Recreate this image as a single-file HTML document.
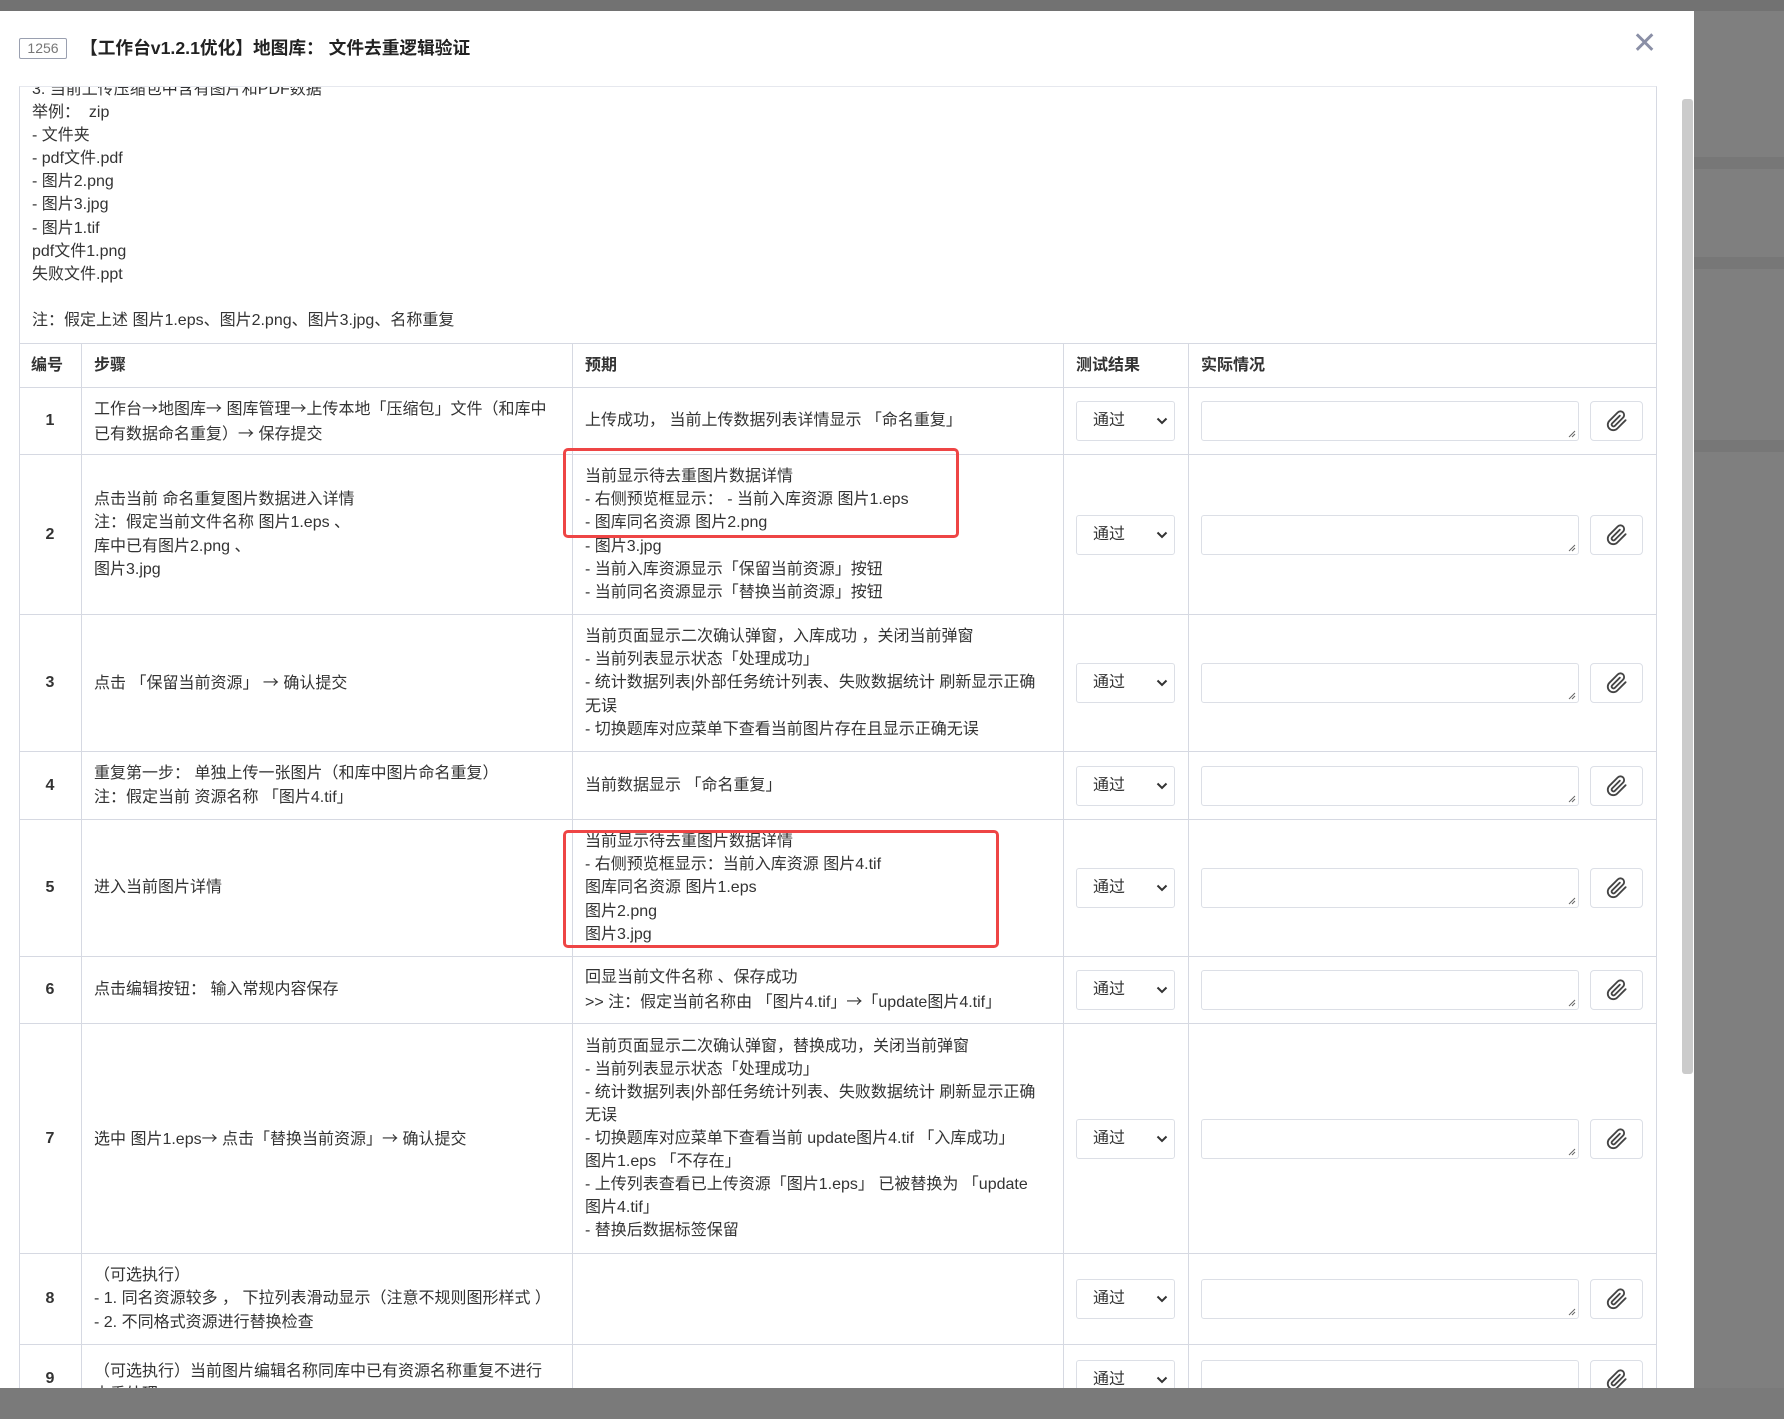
<!DOCTYPE html>
<html><head><meta charset="utf-8">
<style>
*{box-sizing:border-box;margin:0;padding:0}
html,body{width:1784px;height:1419px;overflow:hidden;background:#7f7f7f;font-family:"Liberation Sans","Noto Sans CJK SC",sans-serif;color:#333}
.ar{font-family:"Noto Sans CJK SC",sans-serif}
.top{position:absolute;left:0;top:0;width:1784px;height:11px;background:#727272}
.bg1{position:absolute;left:1694px;top:157px;width:90px;height:12px;background:#777}
.bg2{position:absolute;left:1694px;top:257px;width:90px;height:12px;background:#777}
.bg3{position:absolute;left:1694px;top:440px;width:90px;height:12px;background:#777}
.bot{position:absolute;left:0;top:1388px;width:1784px;height:31px;background:#7a7a7a}
.modal{position:absolute;left:0;top:11px;width:1694px;height:1377px;background:#fff;overflow:hidden}
.badge{position:absolute;left:19px;top:27px;width:48px;height:21px;border:1px solid #9aa0b0;border-radius:2px;font-size:14px;color:#777;text-align:center;line-height:19px}
.title{position:absolute;left:80px;top:24px;font-size:17.7px;font-weight:bold;color:#222;line-height:26px}
.close{position:absolute;left:1632px;top:18px;font-size:30px;color:#8a8fa6;line-height:30px}
.sb{position:absolute;left:1682px;top:88px;width:11px;height:975px;background:#cbcbcb;border-radius:3px}
.box{position:absolute;left:19px;top:75px;width:1638px;height:1400px;border-left:1px solid #d6d9e2;border-right:1px solid #d6d9e2;border-top:1px solid #e6e8ee}
.desc{position:absolute;left:32px;top:68px;font-size:16px;line-height:23.1px;color:#333;white-space:pre}
.row{position:absolute;left:19px;width:1638px;border-bottom:1px solid #d6d9e2}
.c{position:absolute;top:0;bottom:0;display:flex;align-items:center;font-size:16px;line-height:23.1px;border-right:1px solid #d6d9e2;white-space:nowrap}
.c0{left:0;width:63px;justify-content:center;font-weight:bold}
.c1{left:63px;width:491px;padding-left:12px}
.c2{left:554px;width:491px;padding-left:12px}
.c3{left:1045px;width:125px}
.c4{left:1170px;width:468px;border-right:none}
.hd .c{font-weight:bold}
.hd .c0{justify-content:flex-start;padding-left:12px}
.sel{position:absolute;left:12px;width:99px;height:40px;border:1px solid #dcdfe6;border-radius:3px;font-size:16px;padding-left:16px;line-height:38px;top:50%;margin-top:-20px}
.sel svg{position:absolute;right:6px;top:15px}
.ta{position:absolute;left:12px;width:378px;height:40px;border:1px solid #dcdfe6;border-radius:3px;top:50%;margin-top:-20px}
.ta svg{position:absolute;right:2px;bottom:2px}
.at{position:absolute;left:401px;width:53px;height:40px;border:1px solid #dcdfe6;border-radius:4px;top:50%;margin-top:-20px}
.at svg{position:absolute;left:15px;top:8px}
.red{position:absolute;border:3.5px solid #ee4545;border-radius:5px}
</style></head><body>
<div class="top"></div><div class="bg1"></div><div class="bg2"></div><div class="bg3"></div><div class="bot"></div>
<div class="modal">
<div class="badge">1256</div>
<div class="title">【工作台v1.2.1优化】地图库： 文件去重逻辑验证</div>
<div class="close">✕</div>
<div class="sb"></div>
<div class="box"></div>
<div style="position:absolute;left:20px;top:76px;width:1636px;height:1300px;overflow:hidden">
<div class="desc" style="left:12px;top:-9px">3. 当前上传压缩包中含有图片和PDF数据
举例：  zip
- 文件夹
- pdf文件.pdf
- 图片2.png
- 图片3.jpg
- 图片1.tif
pdf文件1.png
失败文件.ppt

注：假定上述 图片1.eps、图片2.png、图片3.jpg、名称重复</div>
</div>
<div id="t"></div>
</div>
<script>
var rows=[
["编号","步骤","预期",332,377,1],
["1","工作台→地图库→ 图库管理→上传本地「压缩包」文件（和库中<br>已有数据命名重复）→ 保存提交","上传成功， 当前上传数据列表详情显示 「命名重复」",377,444],
["2","点击当前 命名重复图片数据进入详情<br>注：假定当前文件名称 图片1.eps 、<br>库中已有图片2.png 、<br>图片3.jpg","当前显示待去重图片数据详情<br>- 右侧预览框显示：  - 当前入库资源 图片1.eps<br>- 图库同名资源 图片2.png<br>- 图片3.jpg<br>- 当前入库资源显示「保留当前资源」按钮<br>- 当前同名资源显示「替换当前资源」按钮",444,604],
["3","点击 「保留当前资源」 → 确认提交","当前页面显示二次确认弹窗，入库成功 ，关闭当前弹窗<br>- 当前列表显示状态「处理成功」<br>- 统计数据列表|外部任务统计列表、失败数据统计 刷新显示正确<br>无误<br>- 切换题库对应菜单下查看当前图片存在且显示正确无误",604,741],
["4","重复第一步： 单独上传一张图片（和库中图片命名重复）<br>注：假定当前 资源名称 「图片4.tif」","当前数据显示 「命名重复」",741,809],
["5","进入当前图片详情","当前显示待去重图片数据详情<br>- 右侧预览框显示：当前入库资源 图片4.tif<br>图库同名资源 图片1.eps<br>图片2.png<br>图片3.jpg",809,946],
["6","点击编辑按钮： 输入常规内容保存","回显当前文件名称 、保存成功<br>&gt;&gt; 注：假定当前名称由 「图片4.tif」→「update图片4.tif」",946,1013],
["7","选中 图片1.eps→ 点击「替换当前资源」→ 确认提交","当前页面显示二次确认弹窗，替换成功，关闭当前弹窗<br>- 当前列表显示状态「处理成功」<br>- 统计数据列表|外部任务统计列表、失败数据统计 刷新显示正确<br>无误<br>- 切换题库对应菜单下查看当前 update图片4.tif 「入库成功」<br>图片1.eps 「不存在」<br>- 上传列表查看已上传资源「图片1.eps」 已被替换为 「update<br>图片4.tif」<br>- 替换后数据标签保留",1013,1243],
["8","（可选执行）<br>- 1. 同名资源较多 ， 下拉列表滑动显示（注意不规则图形样式 ）<br>- 2. 不同格式资源进行替换检查","",1243,1334],
["9","（可选执行）当前图片编辑名称同库中已有资源名称重复不进行<br>去重处理","",1334,1439]
];
function ar(s){return '<div>'+s.replace(/→/g,'<span class="ar">→</span>')+'</div>';}
var chev='<svg width="12" height="8" viewBox="0 0 12 8"><path d="M1.5 1.5L6 6 10.5 1.5" stroke="#333" stroke-width="2" fill="none"/></svg>';
var sel='<div class="sel">通过'+chev+'</div>';
var ta='<div class="ta"><svg width="9" height="9" viewBox="0 0 9 9"><path d="M8 2L2 8M8 5L5 8" stroke="#666" stroke-width="1"/></svg></div>';
var clip='<svg width="22" height="22" viewBox="0 0 24 24"><path d="M21.4 11.1l-9.2 9.2a6 6 0 0 1-8.5-8.5l9.2-9.2a4 4 0 0 1 5.7 5.7l-9.2 9.2a2 2 0 0 1-2.8-2.8l8.5-8.5" stroke="#444" stroke-width="2" fill="none" stroke-linecap="round"/></svg>';
var at='<div class="at">'+clip+'</div>';
var h='';
rows.forEach(function(r){
 var top=r[3],ht=r[4]-r[3];
 if(r[5]){
  h+='<div class="row hd" style="top:'+top+'px;height:'+ht+'px;border-top:1px solid #d6d9e2"><div class="c c0">'+r[0]+'</div><div class="c c1">'+r[1]+'</div><div class="c c2">'+r[2]+'</div><div class="c c3" style="padding-left:12px">测试结果</div><div class="c c4" style="padding-left:12px">实际情况</div></div>';
 } else {
  var n9=r[0]=='9';
  var st=n9?'align-items:flex-start;padding-top:15px':'';
  var fx='style="top:15px;margin-top:0"';
  h+='<div class="row" style="top:'+top+'px;height:'+ht+'px"><div class="c c0" style="'+(n9?'align-items:flex-start;padding-top:22px':'')+'">'+r[0]+'</div><div class="c c1" style="'+st+'">'+ar(r[1])+'</div><div class="c c2">'+ar(r[2])+'</div><div class="c c3">'+(n9?'<div class="sel" '+fx+'>通过'+chev+'</div>':sel)+'</div><div class="c c4">'+(n9?'<div class="ta" '+fx+'></div><div class="at" '+fx+'>'+clip+'</div>':ta+at)+'</div></div>';
 }
});
h+='<div class="red" style="left:563px;top:437px;width:396px;height:90px"></div>';
h+='<div class="red" style="left:563px;top:819px;width:436px;height:118px"></div>';
document.getElementById('t').innerHTML=h;
</script>
</body></html>
